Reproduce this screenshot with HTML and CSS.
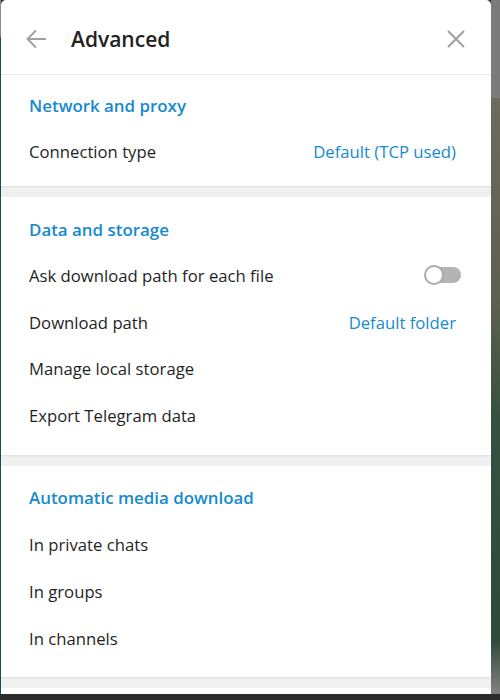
FILE: index.html
```html
<!DOCTYPE html>
<html lang="en">
<head>
<meta charset="utf-8">
<title>Advanced</title>
<link rel="stylesheet" href="styles.css">
</head>
<body>
<div class="panel">
  <div class="header">
    <svg class="back" width="22" height="22" viewBox="0 0 22 22"><path d="M2.5 11 H21 M11 2.5 L2.5 11 L11 19.5" fill="none" stroke="#a0a0a0" stroke-width="2"/></svg>
    <div class="title">Advanced</div>
    <svg class="close" width="18" height="18" viewBox="0 0 18 18"><path d="M1 1 L17 17 M17 1 L1 17" fill="none" stroke="#a0a0a0" stroke-width="2"/></svg>
  </div>

  <div class="section s1">
    <div class="section-title">Network and proxy</div>
    <div class="row"><span>Connection type</span><span class="value">Default (TCP used)</span></div>
  </div>
  <div class="divider"></div>

  <div class="section s2">
    <div class="section-title">Data and storage</div>
    <div class="row toggle-row"><span>Ask download path for each file</span><span class="toggle"></span></div>
    <div class="row"><span>Download path</span><span class="value">Default folder</span></div>
    <div class="row"><span>Manage local storage</span></div>
    <div class="row"><span>Export Telegram data</span></div>
  </div>
  <div class="divider"></div>

  <div class="section s3">
    <div class="section-title">Automatic media download</div>
    <div class="row"><span>In private chats</span></div>
    <div class="row"><span>In groups</span></div>
    <div class="row"><span>In channels</span></div>
  </div>
  <div class="divider"></div>
</div>
</body>
</html>
```
FILE: styles.css
```css
html, body {
  margin: 0;
  padding: 0;
}
body {
  width: 500px;
  height: 700px;
  overflow: hidden;
  font-family: "Open Sans", "DejaVu Sans", sans-serif;
  background:
    linear-gradient(#8a8a8a 0 37px, #1d4b5e 37px) no-repeat 0 0 / 1px 694px,
    linear-gradient(#7b7b7b 0 98px, #6c6b5c 98px, #5e604f 300px, #36503f 420px, #2f4a38 640px, #7d7d7d 690px) no-repeat 491px 0 / 9px 694px,
    #2c2c2c;
}
.panel {
  width: 490px;
  height: 694px;
  margin-left: 1px;
  background: #fff;
  border-radius: 5px 5px 0 0;
  overflow: hidden;
  display: flex;
  flex-direction: column;
}
.header {
  height: 70px;
  padding-top: 4px;
  border-bottom: 1px solid #e7e7e7;
  display: flex;
  align-items: center;
  flex-shrink: 0;
}
.back {
  margin-left: 24px;
}
.title {
  margin-left: 24px;
  font-size: 21px;
  font-weight: 600;
  color: #222;
  flex: 1;
}
.close {
  margin-right: 26px;
}
.section {
  padding: 8px 0 13px;
  flex-shrink: 0;
}
.s1 { padding: 7px 0 11px; }
.s2 { padding: 9px 0 16px; }
.s2 .row { height: 46.7px; }
.s3 { padding: 9px 0 15px; }
.section-title {
  height: 46px;
  display: flex;
  align-items: center;
  padding-left: 28px;
  font-size: 16.9px;
  font-weight: 600;
  color: #168acd;
}
.row {
  height: 47px;
  display: flex;
  align-items: center;
  justify-content: space-between;
  padding: 0 35px 0 28px;
  font-size: 16.7px;
  color: #1f1f1f;
}
.toggle-row {
  padding-right: 30px;
}
.value {
  color: #168acd;
}
.toggle {
  position: relative;
  width: 33px;
  height: 16px;
  border-radius: 8px;
  background: #b3b3b3;
}
.toggle::before {
  content: "";
  position: absolute;
  left: -4px;
  top: -2px;
  width: 16px;
  height: 16px;
  border: 2px solid #ababab;
  border-radius: 50%;
  background: #fff;
}
.divider {
  height: 11px;
  flex-shrink: 0;
  background: #f0f0f0;
  box-shadow: inset 0 3px 2px -2px rgba(0, 0, 0, 0.07);
}
```
